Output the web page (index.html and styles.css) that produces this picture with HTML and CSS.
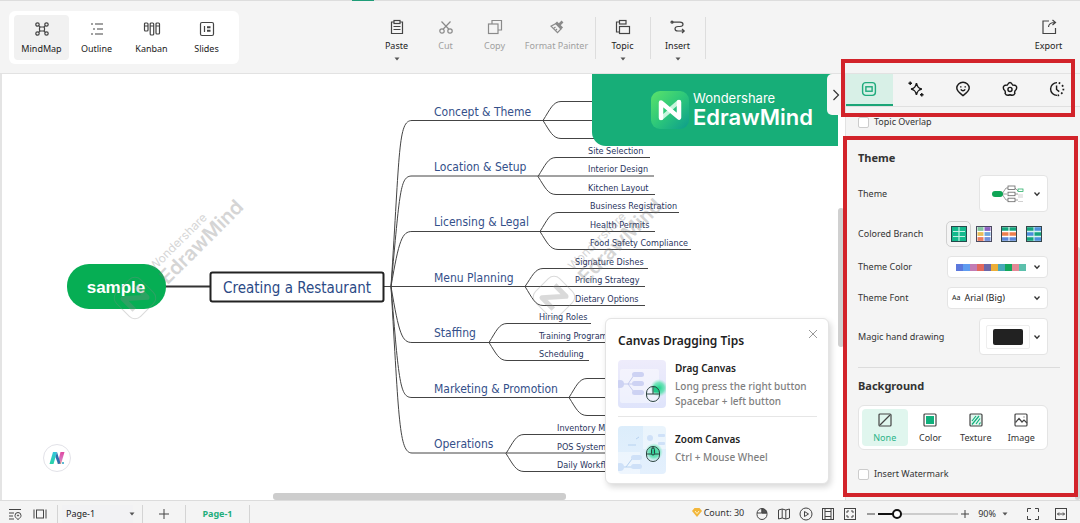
FILE: index.html
```html
<!DOCTYPE html>
<html lang="en">
<head>
<meta charset="utf-8">
<title>Mind map editor</title>
<link rel="stylesheet" href="styles.css">
</head>
<body>
<svg class="defs" aria-hidden="true">
  <defs>
    <linearGradient id="logoGrad" x1="0" y1="0" x2="1" y2="1"><stop offset="0" stop-color="#5be36a"/><stop offset=".5" stop-color="#2cc77a"/><stop offset="1" stop-color="#0d9c8c"/></linearGradient>
    <linearGradient id="tealGrad" x1="0" y1="0" x2="0" y2="1"><stop offset="0" stop-color="#35c4dc"/><stop offset="1" stop-color="#27d3a6"/></linearGradient>
    <linearGradient id="pinkGrad" x1="0" y1="0" x2="0" y2="1"><stop offset="0" stop-color="#e0479f"/><stop offset=".6" stop-color="#d873c0"/><stop offset="1" stop-color="#f0a884"/></linearGradient>
    <linearGradient id="dragGrad" x1="0" y1="0" x2="0" y2="1"><stop offset="0" stop-color="#eeecfb"/><stop offset="1" stop-color="#dfe4fb"/></linearGradient>
    <linearGradient id="zoomGrad" x1="0" y1="0" x2="0" y2="1"><stop offset="0" stop-color="#dcedfb"/><stop offset="1" stop-color="#e4f0fd"/></linearGradient>
    <radialGradient id="glow"><stop offset="0" stop-color="#1fd68c"/><stop offset=".6" stop-color="#4fe0a8" stop-opacity=".75"/><stop offset="1" stop-color="#8cebc8" stop-opacity="0"/></radialGradient>
    <symbol id="chev" viewBox="0 0 8 8"><path d="M1.500 2.500 4 5.200 6.500 2.500" fill="none" stroke="#333" stroke-width="1.300"/></symbol>
    <symbol id="caret" viewBox="0 0 6 4"><path d="M.5.5h5L3 3.500z" fill="#555"/></symbol>
    <symbol id="mouse" viewBox="0 0 16 18"><rect x="1.500" y="1.500" width="13" height="15" rx="6.500" fill="none" stroke="#2c4440"/><path d="M1.500 9h13M8 1.500V9" stroke="#2c4440"/></symbol>
  </defs>
</svg>

<header class="toolbar">
  <span class="doc-marker"></span>
  <nav class="views">
    <button class="view active"><svg viewBox="0 0 16 16" class="ic"><circle cx="3.500" cy="3.500" r="1.700"/><circle cx="12.500" cy="3.500" r="1.700"/><circle cx="3.500" cy="12.500" r="1.700"/><circle cx="12.500" cy="12.500" r="1.700"/><rect x="5.500" y="6" width="5" height="4" rx="1"/><path d="m4.700 4.700 1.500 1.500m5.100-1.500L9.800 6.200m-5.100 5.100 1.500-1.500m5.100 1.500L9.800 9.800"/></svg>MindMap</button>
    <button class="view"><svg viewBox="0 0 16 16" class="ic"><path d="M2 3h2m2 0h8M4 8h2m2 0h6M2 13h2m2 0h8"/></svg>Outline</button>
    <button class="view"><svg viewBox="0 0 18 16" class="ic wide"><rect x="1.500" y="2" width="3.500" height="8" rx="1"/><rect x="7.200" y="2" width="3.500" height="12" rx="1"/><rect x="13" y="2" width="3.500" height="11" rx="1"/><path d="M1.500 5H5M7.200 5h3.500M13 5h3.500"/></svg>Kanban</button>
    <button class="view"><svg viewBox="0 0 16 16" class="ic"><rect x="1.500" y="1.500" width="13" height="13" rx="1.500"/><path d="M5.500 5v6"/><path d="M8 6.300h3.500M8 9.700h3.500" stroke-width="2"/></svg>Slides</button>
  </nav>
  <div class="tools">
    <button class="tool"><svg viewBox="0 0 16 16" class="ic"><path d="M5 3H2.500v11.500h11V3H11M4.500 7.500h7M4.500 10.500h7"/><rect x="5" y="1.500" width="6" height="3"/></svg>Paste<svg class="caret"><use href="#caret"/></svg></button>
    <button class="tool off"><svg viewBox="0 0 16 16" class="ic"><circle cx="4" cy="12" r="2.200"/><circle cx="12" cy="12" r="2.200"/><path d="M3.500 2.500 10.700 10M12.500 2.500 5.300 10"/></svg>Cut</button>
    <button class="tool off"><svg viewBox="0 0 16 16" class="ic"><rect x="1.500" y="5" width="9.500" height="9.500"/><path d="M5 5V1.500h9.500V11H11"/></svg>Copy</button>
    <button class="tool painter off"><svg viewBox="0 0 16 16" class="ic"><path d="M7 4.500 2 7.200l6.500 6.500L12 10z"/><path d="m10 6 3.500-3.500" stroke-width="2.600"/><path d="m7 3.500 6 6" stroke-width="3"/><path d="m4.500 9.500 2-1.500M6.500 11.500 8 10"/></svg>Format Painter</button>
    <span class="sep"></span>
    <button class="tool"><svg viewBox="0 0 16 16" class="ic"><path d="M4.500 3H1.500v10h3"/><rect x="4.500" y="1.500" width="6.500" height="3.500"/><rect x="4.500" y="7.500" width="10" height="7"/></svg>Topic<svg class="caret"><use href="#caret"/></svg></button>
    <span class="sep"></span>
    <button class="tool"><svg viewBox="0 0 16 16" class="ic"><path d="M2 3.200h8c4 0 4 4.300 0 4.300H8c-4 0-4 4.500 0 4.500h6.500M12 10l2.200 2-2.200 2"/><circle cx="2" cy="3.200" r="1"/></svg>Insert<svg class="caret"><use href="#caret"/></svg></button>
    <span class="sep"></span>
  </div>
  <button class="tool export"><svg viewBox="0 0 16 16" class="ic"><path d="M8 2H2v12.500h12.500V9M7.500 8c0-3 2.500-4.500 6.500-4.500M11.500 1l3 2.500-3 2.500"/></svg>Export</button>
</header>

<main class="workspace">
  <section class="canvas">
    <svg class="map" viewBox="2 74 836 426">
      <g class="lines">
        <path d="M165 286.500h45" class="thick"/>
        <path d="M384 286.500h141"/>
        <path d="M391 286.500C400 150 398 120.500 412 120.500H543"/>
        <path d="M391 286.500C400 190 400 176 412 176H538"/>
        <path d="M391 286.500C399 240 402 231.500 412 231.500H540"/>
        <path d="M391 286.500C399 334 402 342.500 412 342.500H489"/>
        <path d="M391 286.500C399 384 400 397.500 412 397.500H569"/>
        <path d="M391 286.500C399 420 399 453 412 453H506"/>
        <path d="M620 101.500h-59c-8 0-11 8-18 19c7 11 10 18 18 18h59M543 120.500h77"/>
        <path d="M650 157.500h-94c-8 0-11 8-18 19c7 11 10 18 18 18h99M538 176h116"/>
        <path d="M679 212.500h-121c-8 0-11 8-18 19c7 11 10 18 18 18h133M540 231.500h115"/>
        <path d="M648 268.500h-105c-8 0-11 8-18 18c7 11 10 19 18 19h102M525 286.500h120"/>
        <path d="M591 323.500h-84c-8 0-11 8-18 19c7 11 10 18 18 18h82M489 342.500h130"/>
        <path d="M620 378.500h-33c-8 0-11 8-18 19c7 11 10 18 18 18h33M569 397.500h50"/>
        <path d="M620 434.500h-96c-8 0-11 8-18 19c7 11 10 18 18 18h96M506 453h114"/>
      </g>
      <rect x="67" y="264" width="99" height="45" rx="22" fill="#06ae54"/>
      <text x="116" y="293" class="root">sample</text>
      <rect x="210.500" y="272.500" width="173" height="29" rx="2" class="main-box"/>
      <text x="223" y="293" class="main-text">Creating a Restaurant</text>
      <g class="branch">
        <text x="434" y="116">Concept &amp; Theme</text>
        <text x="434" y="171">Location &amp; Setup</text>
        <text x="434" y="226">Licensing &amp; Legal</text>
        <text x="434" y="282">Menu Planning</text>
        <text x="434" y="337">Staffing</text>
        <text x="434" y="393">Marketing &amp; Promotion</text>
        <text x="434" y="448">Operations</text>
      </g>
      <g class="leaf">
        <text x="588" y="154">Site Selection</text>
        <text x="588" y="172">Interior Design</text>
        <text x="588" y="191">Kitchen Layout</text>
        <text x="590" y="209">Business Registration</text>
        <text x="590" y="228">Health Permits</text>
        <text x="590" y="246">Food Safety Compliance</text>
        <text x="575" y="265">Signature Dishes</text>
        <text x="575" y="283">Pricing Strategy</text>
        <text x="575" y="302">Dietary Options</text>
        <text x="539" y="320">Hiring Roles</text>
        <text x="539" y="339">Training Programs</text>
        <text x="539" y="357">Scheduling</text>
        <text x="557" y="431">Inventory Management</text>
        <text x="557" y="450">POS System</text>
        <text x="557" y="468">Daily Workflow</text>
      </g>
      <g id="stamp" class="stamp" transform="translate(135 298) rotate(-45)">
        <rect x="-17" y="-17" width="34" height="34" rx="8" fill="none" stroke="#888" stroke-width="1"/>
        <path d="M-9 8V-8L9 8V-8" fill="none" stroke="#888" stroke-width="5" stroke-linejoin="round"/>
        <text x="32" y="-5" class="stamp-small">Wondershare</text>
        <text x="32" y="14" class="stamp-big">EdrawMind</text>
      </g>
      <use href="#stamp" transform="translate(419 -1)"/>
    </svg>

    <div class="brand">
      <svg viewBox="0 0 38 38" class="brand-logo"><rect width="38" height="38" rx="9" fill="url(#logoGrad)"/><path d="m10.500 27 7-6M27.500 11l-7 6" fill="none" stroke="#c6f5dc" stroke-width="4" stroke-linecap="round"/><path d="M10 27V11.500L28 26.500V11" fill="none" stroke="#fff" stroke-width="4.500" stroke-linejoin="round" stroke-linecap="round"/></svg>
      <div class="brand-name"><span>Wondershare</span><strong>EdrawMind</strong></div>
    </div>
    <button class="collapse" aria-label="Collapse panel"><svg viewBox="0 0 8 14"><path d="m1.500 2 5 5-5 5" fill="none" stroke="#333" stroke-width="1.200"/></svg></button>

    <button class="assistant" aria-label="AI assistant"><svg viewBox="0 0 16 14"><path d="M4 1h4L4.500 13H.5z" fill="url(#tealGrad)"/><path d="M11.500 1h4L12 13H8.500z" fill="url(#pinkGrad)"/><path d="M8 1 11.500 12.500 9 13 6.500 6z" fill="#2c6fae"/><circle cx="14" cy="12" r="1" fill="#27a3c8"/></svg></button>

    <aside class="tips">
      <button class="close" aria-label="Close"><svg viewBox="0 0 10 10"><path d="m1 1 8 8M9 1 1 9" stroke="#999"/></svg></button>
      <h2>Canvas Dragging Tips</h2>
      <div class="tip">
        <svg viewBox="0 0 48 48" class="art"><rect width="48" height="48" rx="4" fill="url(#dragGrad)"/><rect x="2" y="9" width="39" height="34" rx="2" fill="#fff" opacity=".45"/><path d="M3 24h7l6-9M10 24h6M10 24l6 8" stroke="#c5cbee" fill="none"/><g fill="#cdd2f3"><circle cx="2" cy="24" r="4"/><rect x="14" y="12" width="12" height="5" rx="2.500"/><rect x="14" y="21" width="12" height="5" rx="2.500"/><rect x="14" y="30" width="12" height="5" rx="2.500"/></g><circle cx="41" cy="28" r="9" fill="url(#glow)"/><path d="M35.500 25.500c3 0 6 3 6 7h-6z" fill="#20c987"/><use href="#mouse" x="27" y="25" width="16" height="18"/></svg>
        <div><h3>Drag Canvas</h3><p>Long press the right button<br>Spacebar + left button</p></div>
      </div>
      <div class="tip second">
        <svg viewBox="0 0 48 48" class="art"><rect width="48" height="48" rx="4" fill="url(#zoomGrad)"/><rect x="25" width="23" height="23" fill="#fff" opacity=".4"/><rect y="26" width="22" height="22" fill="#fff" opacity=".4"/><path d="M10 19h8M18 13l3-2M2 41h6l6-8M8 41h6" stroke="#b7d2f0" fill="none"/><g fill="#cfe1f8"><circle cx="2" cy="41" r="4"/><rect x="13" y="29" width="11" height="5" rx="2.500"/><rect x="13" y="38" width="11" height="5" rx="2.500"/><circle cx="32" cy="12" r="3"/><rect x="40" y="8" width="7" height="3" rx="1"/><rect x="40" y="16" width="7" height="3" rx="1"/></g><circle cx="36" cy="26" r="9" fill="url(#glow)"/><use href="#mouse" x="27" y="19" width="16" height="18"/><rect x="33.500" y="22" width="3" height="7" rx="1.500" fill="#32c895" stroke="#2c4440"/></svg>
        <div><h3>Zoom Canvas</h3><p>Ctrl + Mouse Wheel</p></div>
      </div>
    </aside>
    <span class="scroll-x"></span>
    <span class="scroll-y"></span>
  </section>

  <section class="panel">
    <nav class="tabs">
      <button class="tab active" aria-label="Style"><svg viewBox="0 0 18 18" class="ic"><rect x="1.800" y="1.800" width="14.400" height="14.400" rx="3.500"/><rect x="5.500" y="6.500" width="7" height="5"/></svg></button>
      <button class="tab" aria-label="AI"><svg viewBox="0 0 18 18" class="ic"><path d="M9.500 2.500c1 4 2 5.500 6 6.500-4 1-5 2.500-6 6.500-1-4-2-5.500-6-6.500 4-1 5-2.500 6-6.500zM2.500.5v4M.5 2.500h4M15.500 13.500v4M13.500 15.500h4"/></svg></button>
      <button class="tab" aria-label="Marks"><svg viewBox="0 0 18 18" class="ic"><path d="M9 16.500C5 13.500 2 11.500 2 8a7 6.500 0 0 1 14 0c0 3.500-3 5.500-7 8.500zM6.500 6v1.200M11.500 6v1.200M6.500 9.500c1.500 2 3.500 2 5 0"/></svg></button>
      <button class="tab" aria-label="Clip art"><svg viewBox="0 0 18 18" class="ic"><path d="M6 4.500Q9-1 12 4.500q6 0 4 5-2.500 2-1.500 4.500-1.500 3-5.500 1.500-4 1.500-5.500-1.500Q4.500 11.500 2 9.500q-2-5 4-5z"/><circle cx="9" cy="9.500" r="2.300"/></svg></button>
      <button class="tab" aria-label="History"><svg viewBox="0 0 18 18" class="ic"><path d="M9 1.800a7.200 7.200 0 1 0 0 14.400M8.500 5v4.500l3 2.500"/><path d="M9 1.800a7.200 7.200 0 0 1 0 14.400" stroke-width="2" stroke-dasharray="1.800 2.600" stroke-dashoffset="-2"/></svg></button>
    </nav>
    <div class="options">
      <label class="check overlap"><input type="checkbox">Topic Overlap</label>
      <h2>Theme</h2>
      <div class="rows">
        <div class="row"><span>Theme</span><button class="picker square" aria-label="Theme"><svg viewBox="0 0 32 18" class="thumb"><path d="M10 9h5M10 9l4-6h2M10 9l4 6h2M23 3l3 3M23 9h3M23 15h3" fill="none" stroke="#888" stroke-width=".8"/><rect y="6" width="11" height="6" rx="3" fill="#10a556"/><g fill="#fff" stroke="#666" stroke-width=".8"><rect x="16" y="1" width="7" height="3.500"/><rect x="16" y="7.200" width="7" height="3.500"/><rect x="16" y="13.200" width="7" height="3.500"/></g><rect x="26" y="4" width="5" height="2.500" fill="none" stroke="#10a556" stroke-width=".7"/><path d="M26 10h5M26 12h5M26 16.500h5" stroke="#bbb" stroke-width=".7"/></svg><svg class="chev"><use href="#chev"/></svg></button></div>
        <div class="row"><span>Colored Branch</span><div class="swatches">
          <button class="swatch active" aria-label="Single color"><svg viewBox="0 0 16 16"><rect x=".5" y=".5" width="15" height="15" fill="#14b98c" stroke="#26484a"/><path d="M8 1v14M2 5.500h12M2 10.500h12" stroke="#c2f0e2" stroke-width="1.200"/></svg></button>
          <button class="swatch" aria-label="Rainbow"><svg viewBox="0 0 16 16"><rect x=".5" y=".5" width="15" height="15" fill="#fff" stroke="#4a4a60"/><path d="M1.500 3h6" stroke="#7fc4a0" stroke-width="3.800"/><path d="M8.500 3h6" stroke="#8a5fc0" stroke-width="3.800"/><path d="M1.500 8h6" stroke="#e9bd58" stroke-width="3.800"/><path d="M8.500 8h6" stroke="#6fa5dc" stroke-width="3.800"/><path d="M1.500 13h6" stroke="#ea7c5e" stroke-width="3.800"/><path d="M8.500 13h6" stroke="#7390d8" stroke-width="3.800"/></svg></button>
          <button class="swatch" aria-label="Alternating"><svg viewBox="0 0 16 16"><rect x=".5" y=".5" width="15" height="15" fill="#fff" stroke="#35454a"/><path d="M1 3h6.500M8.500 3H15" stroke="#14a57c" stroke-width="3.500"/><path d="M1 8h6.500M8.500 8H15" stroke="#ee7e4c" stroke-width="3.500"/><path d="M1 13h6.500M8.500 13H15" stroke="#5c86d8" stroke-width="3.500"/></svg></button>
          <button class="swatch" aria-label="Two color"><svg viewBox="0 0 16 16"><rect x=".5" y=".5" width="15" height="15" fill="#d6f3f0" stroke="#35454a"/><path d="M1 3h6.500M8.500 8H15M1 13h6.500" stroke="#14a57c" stroke-width="3.500"/><path d="M8.500 3H15M1 8h6.500M8.500 13H15" stroke="#4c8fdc" stroke-width="3.500"/></svg></button>
        </div></div>
        <div class="row"><span>Theme Color</span><button class="picker" aria-label="Theme Color"><span class="palette"><i class="c1"></i><i class="c2"></i><i class="c3"></i><i class="c4"></i><i class="c5"></i><i class="c6"></i><i class="c7"></i><i class="c8"></i><i class="c9"></i><i class="c10"></i></span><svg class="chev"><use href="#chev"/></svg></button></div>
        <div class="row"><span>Theme Font</span><button class="picker font"><small>Aa</small>Arial (Big)<svg class="chev"><use href="#chev"/></svg></button></div>
        <div class="row"><span>Magic hand drawing</span><button class="picker square" aria-label="Magic hand drawing"><span class="ink"><i></i></span><svg class="chev"><use href="#chev"/></svg></button></div>
      </div>
      <hr>
      <h2>Background</h2>
      <div class="fills">
        <button class="fill active"><svg viewBox="0 0 14 14" class="ic"><rect x="1" y="1" width="12" height="12" rx="1"/><path d="M2 12 12 2"/></svg>None</button>
        <button class="fill"><svg viewBox="0 0 14 14" class="ic"><rect x="1" y="1" width="12" height="12" rx="1"/><rect x="3" y="3" width="8" height="8" fill="#10b07c" stroke="none"/></svg>Color</button>
        <button class="fill"><svg viewBox="0 0 14 14" class="ic"><rect x="1" y="1" width="12" height="12" rx="1" fill="#e2f6ee"/><path d="m3 8 4-5M3 11.500 10 3M7 11l4-5.500M10 11.500l1.500-2" stroke="#10b07c"/></svg>Texture</button>
        <button class="fill"><svg viewBox="0 0 14 14" class="ic"><rect x="1" y="1" width="12" height="12" rx="1"/><path d="m1.500 9.500 3.500-4 3 3.500 2-2 3 3"/><path d="M9.500 4h1"/></svg>Image</button>
      </div>
      <label class="check mark"><input type="checkbox">Insert Watermark</label>
    </div>
    <span class="panel-scroll"></span>
    <span class="callout top"></span>
    <span class="callout bottom"></span>
  </section>
</main>

<footer class="status">
  <button class="mini" aria-label="Outline"><svg viewBox="0 0 14 14" class="ic"><path d="M1 2.500h12M1 6h5M1 9h4M1 12h5M10 12.500C8 11 7 10 7 8.500a3 3 0 0 1 6 0c0 1.500-1 2.500-3 4z"/><circle cx="10" cy="8.500" r=".6"/></svg></button>
  <button class="mini" aria-label="Pages"><svg viewBox="0 0 14 14" class="ic"><path d="M1 2.500v9M13 2.500v9"/><rect x="3.500" y="3" width="7" height="8"/></svg></button>
  <span class="bar"></span>
  <select class="page-select" aria-label="Page"><option>Page-1</option></select>
  <svg class="caret page-caret"><use href="#caret"/></svg>
  <span class="bar"></span>
  <button class="add" aria-label="Add page"><svg viewBox="0 0 12 12" class="ic"><path d="M6 1v10M1 6h10"/></svg></button>
  <span class="bar"></span>
  <button class="page-tab">Page-1</button>
  <span class="bar"></span>
  <div class="count"><svg viewBox="0 0 10 9"><path d="M2.500 0h5L10 3 5 9 0 3z" fill="#f2b63a"/><path d="m3 3 2 2.500L7 3" fill="none" stroke="#fff3c8"/></svg>Count: 30<span class="quota"></span></div>
  <button class="mini" aria-label="Mouse"><svg viewBox="0 0 14 14" class="ic"><rect x="2" y="1.500" width="10" height="11" rx="5"/><path d="M2 6h10M7 1.500V6"/><path d="M7 2c3 0 4.500 1.500 4.500 4H7z" fill="#555"/></svg></button>
  <button class="mini" aria-label="Map"><svg viewBox="0 0 14 14" class="ic"><path d="m1.500 3 3.700-1 3.600 1 3.700-1v9l-3.700 1-3.600-1-3.700 1zM5.200 2v9M8.800 3v9"/></svg></button>
  <button class="mini" aria-label="Play"><svg viewBox="0 0 14 14" class="ic"><circle cx="7" cy="7" r="6"/><path d="M5.500 4.500v5L9.500 7z"/></svg></button>
  <button class="mini" aria-label="Fit width"><svg viewBox="0 0 14 14" class="ic"><rect x="1.500" y="1.500" width="11" height="11"/><path d="M4 1.500v11M10 1.500v11M4 4.500h6M4 9.500h6"/></svg></button>
  <button class="mini" aria-label="Fit page"><svg viewBox="0 0 14 14" class="ic"><rect x="1.500" y="1.500" width="11" height="11"/><path d="M4 6V4h2M8 4h2v2M10 8v2H8M6 10H4V8"/></svg></button>
  <div class="zoomer">
    <button class="step" aria-label="Zoom out"><svg viewBox="0 0 8 8" class="ic"><path d="M0 4h8"/></svg></button>
    <input type="range" min="0" max="100" value="20" aria-label="Zoom">
    <button class="step" aria-label="Zoom in"><svg viewBox="0 0 8 8" class="ic"><path d="M0 4h8M4 0v8"/></svg></button>
    <button class="percent">90%<svg class="caret"><use href="#caret"/></svg></button>
  </div>
  <button class="mini end" aria-label="Full screen"><svg viewBox="0 0 14 14" class="ic"><path d="M1.500 5V1.500H5M9 1.500h3.500V5M12.500 9v3.500H9M5 12.500H1.500V9"/></svg></button>
  <button class="mini end" aria-label="Collapse"><svg viewBox="0 0 14 14" class="ic"><rect x="1.500" y="1.500" width="11" height="11"/><path d="M3.500 7h7M5 5.500 3.500 7 5 8.500M9 5.500 10.500 7 9 8.500"/></svg></button>
</footer>
</body>
</html>
```
FILE: styles.css
```css
* { box-sizing: border-box; }
body {
  margin: 0;
  height: 100vh;
  display: flex;
  flex-direction: column;
  overflow: hidden;
  background: #f4f4f4;
  color: #333;
  font: 9px/12px "Noto Sans", "Open Sans", sans-serif;
}
button {
  border: 0;
  margin: 0;
  padding: 0;
  background: none;
  color: inherit;
  font: inherit;
}
h2, h3, p { margin: 0; }
.defs { position: absolute; width: 0; height: 0; }
.ic {
  width: 16px;
  height: 16px;
  flex: none;
  fill: none;
  stroke: #444;
  stroke-width: 1.2px;
}
.caret { width: 6px; height: 4px; flex: none; }
.chev { width: 8px; height: 8px; flex: none; }

/* top toolbar */
.toolbar {
  position: relative;
  flex: none;
  display: flex;
  align-items: flex-start;
  padding: 10px 9px 9px;
  border-top: 1px solid #ddd;
  border-bottom: 1px solid #e2e2e2;
}
.doc-marker {
  position: absolute;
  top: -1px;
  left: 352px;
  width: 22px;
  height: 1px;
  background: #1f9d78;
}
.views {
  display: flex;
  padding: 4px 5px;
  border-radius: 6px;
  background: #fff;
}
.view {
  width: 55px;
  height: 45px;
  display: flex;
  flex-direction: column;
  align-items: center;
  gap: 6px;
  padding-top: 6px;
  border-radius: 4px;
  color: #222;
}
.view.active { background: #f1f1f1; }
.ic.wide { width: 18px; }
.tools {
  display: flex;
  margin-left: 133px;
  padding-top: 7px;
}
.tool {
  width: 49px;
  display: flex;
  flex-direction: column;
  align-items: center;
  gap: 5px;
  color: #222;
}
.tool .ic { margin-top: 1px; }
.tool.painter { width: 75px; }
.tool.off { color: #a0a0a0; }
.tool.off .ic { stroke: #8a8a8a; }
.sep {
  width: 1px;
  height: 42px;
  margin: -1px 2px 0 3px;
  background: #ddd;
}
.painter + .sep { margin-left: 1px; }
.tool.export { margin-left: auto; margin-top: 7px; margin-right: -2px; }

/* workspace */
.workspace {
  flex: 1;
  min-height: 0;
  display: grid;
  grid-template-columns: minmax(0, 1fr) 235px;
}
.canvas {
  position: relative;
  overflow: hidden;
  border-left: 2px solid #e4e4e4;
  background: #fff;
}
.map { display: block; width: 836px; height: 426px; }
.lines path { fill: none; stroke: #444; stroke-width: 1; }
.lines .thick { stroke: #333; stroke-width: 2; }
.root {
  font: bold 17px "Liberation Sans", sans-serif;
  fill: #fff;
  text-anchor: middle;
}
.main-box { fill: #fff; stroke: #222; stroke-width: 2; }
.main-text { font: 15px "DejaVu Sans Condensed", "DejaVu Sans", sans-serif; fill: #2b4a86; }
.branch { font: 12px "DejaVu Sans Condensed", "DejaVu Sans", sans-serif; fill: #34508a; }
.leaf { font: 9px "DejaVu Sans Condensed", "DejaVu Sans", sans-serif; fill: #2a3560; }
.stamp { opacity: .3; fill: #777; }
.stamp-small { font: 12px Inter, sans-serif; }
.stamp-big { font: 600 20px Inter, sans-serif; }

.brand {
  position: absolute;
  top: 0;
  right: 7px;
  width: 246px;
  height: 72px;
  display: flex;
  align-items: center;
  gap: 4px;
  padding-left: 59px;
  border-bottom-left-radius: 14px;
  background: #17ae78;
  color: #fff;
}
.brand-logo { width: 38px; height: 38px; }
.brand-name { display: flex; flex-direction: column; font-family: Inter, sans-serif; }
.brand-name span { font-size: 13px; line-height: 14px; }
.brand-name strong { font-size: 22px; line-height: 24px; font-weight: 600; }
.collapse {
  position: absolute;
  top: 0;
  right: 0;
  width: 18px;
  height: 41px;
  display: flex;
  align-items: center;
  justify-content: center;
  border-radius: 5px 0 0 5px;
  background: #f7f7f7;
}
.collapse svg { width: 8px; height: 14px; }
.assistant {
  position: absolute;
  left: 41px;
  bottom: 28px;
  width: 28px;
  height: 28px;
  display: flex;
  align-items: center;
  justify-content: center;
  border: 1px solid #e2e2e8;
  border-radius: 50%;
  background: #fff;
}
.assistant svg { width: 16px; height: 14px; }
.tips {
  position: absolute;
  right: 16px;
  bottom: 16px;
  width: 224px;
  padding: 12px 11px 9px 12px;
  border: 1px solid #e4e4e4;
  border-radius: 6px;
  background: #fff;
  box-shadow: 2px 3px 6px rgba(0, 0, 0, .16);
  color: #222;
}
.tips h2 { font-size: 12px; line-height: 20px; font-weight: 600; }
.close { position: absolute; top: 10px; right: 10px; width: 10px; height: 10px; }
.close svg { display: block; }
.tip { display: flex; gap: 9px; padding: 9px 0 7px; }
.tip.second { padding-bottom: 0; border-top: 1px solid #e6e6e6; }
.art { width: 48px; height: 48px; flex: none; }
.tip h3 { font-size: 10px; line-height: 16px; font-weight: 600; }
.tip p {
  margin-top: 3px;
  color: #808080;
  font-size: 10px;
  line-height: 15px;
  font-weight: 500;
  white-space: nowrap;
}
.tip.second div { padding-top: 5px; }
.scroll-x {
  position: absolute;
  left: 271px;
  bottom: 0;
  width: 293px;
  height: 7px;
  border-radius: 3px;
  background: #cdcdcd;
}
.scroll-y {
  position: absolute;
  right: 1px;
  top: 134px;
  width: 6px;
  height: 139px;
  border-radius: 3px;
  background: #d0d0d0;
}

/* format panel */
.panel {
  position: relative;
  display: flex;
  flex-direction: column;
  border-left: 1px solid #e2e2e2;
}
.tabs {
  display: grid;
  grid-template-columns: repeat(5, 1fr);
  border-bottom: 1px solid #e0e0e0;
}
.tab {
  height: 32px;
  display: flex;
  align-items: center;
  justify-content: center;
  border-bottom: 2px solid transparent;
}
.tab .ic { stroke: #1a1a1a; stroke-width: 1.6px; }
.tab.active { background: #d8f0e7; border-bottom-color: #1ba577; }
.tab.active .ic { stroke: #20ab7d; }
.options { padding: 0 32px 0 12px; }
.options h2 { font-size: 11px; line-height: 22px; font-weight: 700; }
.check { display: flex; align-items: center; gap: 5px; }
.check input {
  appearance: none;
  width: 11px;
  height: 11px;
  margin: 0;
  border: 1px solid #ccc;
  border-radius: 2px;
  background: #fff;
}
.check.overlap { padding: 9px 0 19px; }
.check.mark { padding-top: 18px; }
.rows { display: flex; flex-direction: column; gap: 9px; padding-top: 6px; }
.row { display: flex; align-items: center; justify-content: space-between; }
.picker {
  width: 101px;
  height: 22px;
  display: flex;
  align-items: center;
  justify-content: space-between;
  padding: 0 6px 0 8px;
  border: 1px solid #e4e4e4;
  border-radius: 4px;
  background: #fff;
  color: #222;
}
.picker.square { width: 69px; height: 37px; padding-left: 12px; }
.picker.font { padding-left: 4px; gap: 4px; }
.picker small { font-size: 7px; }
.picker.font .chev { margin-left: auto; }
.thumb { width: 32px; height: 18px; }
.swatches { display: flex; margin-right: 2px; }
.swatch {
  width: 25px;
  height: 26px;
  display: flex;
  align-items: center;
  justify-content: center;
  border-radius: 5px;
}
.swatch.active { border: 1px solid #d0d0d0; }
.swatch svg { width: 16px; height: 16px; }
.palette { display: flex; }
.palette i { width: 7px; height: 7px; }
.c1 { background: #5c78dc; }
.c2 { background: #5f9cf0; }
.c3 { background: #c27cb4; }
.c4 { background: #e2685c; }
.c5 { background: #6c68a8; }
.c6 { background: #ecae38; }
.c7 { background: #48a8b8; }
.c8 { background: #14a85c; }
.c9 { background: #e48896; }
.c10 { background: #5cc0ac; }
.ink {
  width: 44px;
  height: 24px;
  display: flex;
  margin-left: -6px;
  padding: 3px 6px;
  border: 1px solid #eee;
  border-radius: 2px;
}
.ink i { flex: 1; border-radius: 2px; background: #222; }
.options hr {
  margin: 12px -12px 7px 0;
  border: 0;
  border-top: 1px solid #dcdcdc;
}
.fills {
  display: grid;
  grid-template-columns: repeat(4, 1fr);
  margin-top: 8px;
  padding: 3px;
  border: 1px solid #e4e4e4;
  border-radius: 6px;
  background: #fff;
}
.fill {
  height: 37px;
  display: flex;
  flex-direction: column;
  align-items: center;
  gap: 5px;
  padding-top: 4px;
  border-radius: 4px;
}
.fill .ic { width: 14px; height: 14px; }
.fill.active { background: #e0f6ee; color: #2cb488; }
.panel-scroll {
  position: absolute;
  right: 0;
  top: 173px;
  bottom: 0;
  width: 5px;
  border-radius: 3px;
  background: #d6d6d6;
}
.callout { position: absolute; border: 4px solid #d2232a; pointer-events: none; }
.callout.top { left: -5px; right: 5px; top: -15px; height: 58px; }
.callout.bottom { left: -3px; right: 2px; top: 62px; bottom: 3px; }

/* status bar */
.status {
  flex: none;
  height: 23px;
  display: flex;
  align-items: center;
  padding: 3px 8px 0 4px;
  border-top: 1px solid #dcdcdc;
}
.mini {
  width: 22px;
  height: 16px;
  display: flex;
  align-items: center;
  justify-content: center;
}
.status .ic { stroke-width: 1px; }
.mini .ic { width: 14px; height: 14px; }
.mini:nth-child(2) { margin-left: 3px; }
.bar { width: 1px; height: 18px; background: #d4d4d4; }
.mini + .bar { margin-left: 6px; }
.page-select {
  width: 71px;
  height: 18px;
  margin-left: 4px;
  padding: 0 4px;
  appearance: none;
  border: 0;
  background: #f2f2f4;
  color: #222;
  font: inherit;
}
.page-caret { margin-right: 7px; margin-left: -4px; }
.add {
  width: 42px;
  height: 16px;
  display: flex;
  align-items: center;
  justify-content: center;
}
.add .ic { width: 12px; height: 12px; }
.page-tab { width: 63px; color: #1fae7c; font-weight: 700; }
.count {
  position: relative;
  display: flex;
  align-items: center;
  gap: 2px;
  margin-left: auto;
  margin-right: 7px;
  padding-bottom: 2px;
}
.count svg { width: 10px; height: 9px; }
.quota {
  position: absolute;
  left: 0;
  right: -2px;
  bottom: -4px;
  height: 2px;
  background: linear-gradient(90deg, #3bd27c, #138f7c 16px, #dcdcdc 16px);
}
.zoomer { display: flex; align-items: center; margin-left: 6px; }
.step { width: 8px; height: 16px; display: flex; align-items: center; }
.step .ic { width: 8px; height: 8px; }
.zoomer input {
  appearance: none;
  width: 80px;
  height: 12px;
  margin: 0 3px;
  background: linear-gradient(90deg, #111 16px, #ccc 16px) center / 100% 2px no-repeat;
}
.zoomer input::-webkit-slider-thumb {
  appearance: none;
  width: 10px;
  height: 10px;
  border: 2px solid #111;
  border-radius: 50%;
  background: #fff;
}
.percent { display: flex; align-items: center; gap: 6px; margin-left: 9px; }
.mini.end { margin-left: 6px; }
.zoomer + .mini.end { margin-left: 14px; }
```
